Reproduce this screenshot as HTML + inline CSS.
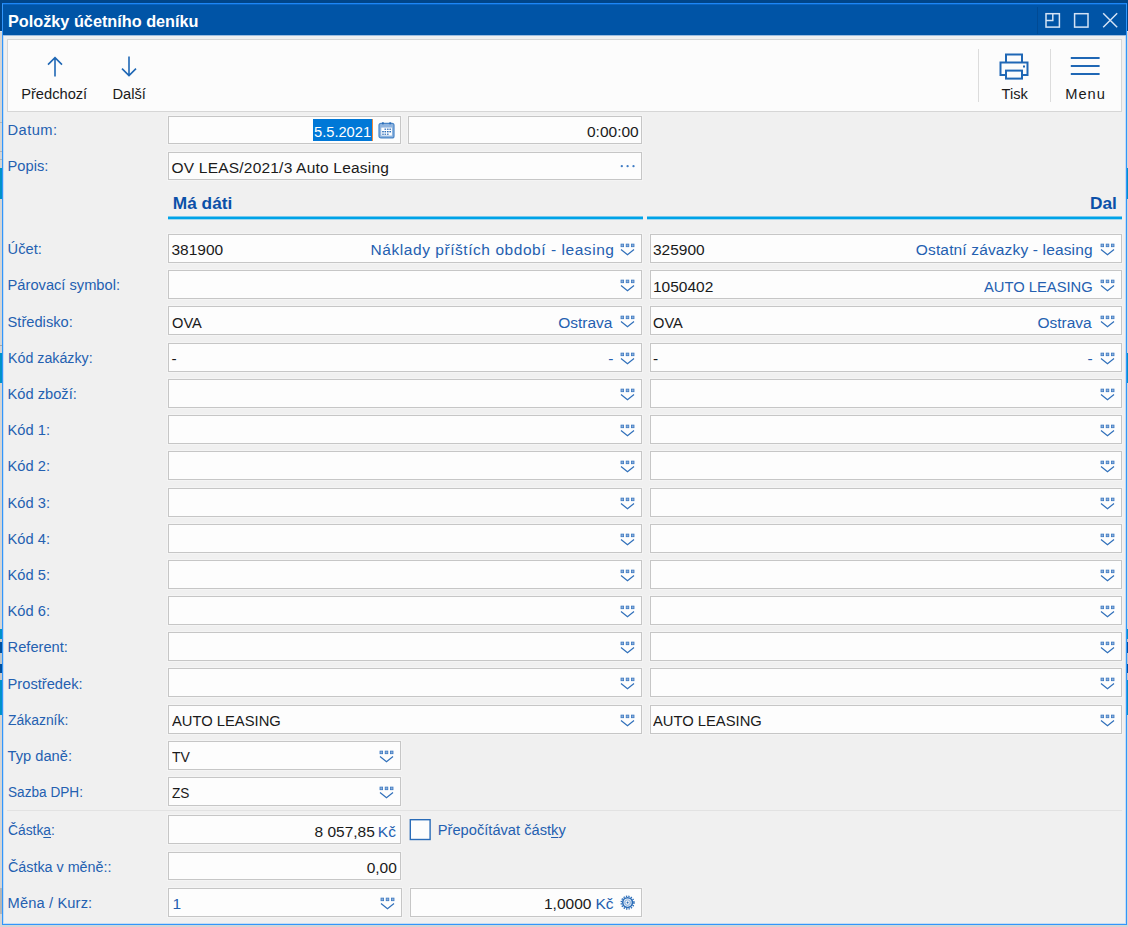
<!DOCTYPE html>
<html lang="cs"><head><meta charset="utf-8"><title>Položky účetního deníku</title>
<style>
html,body{margin:0;padding:0}
body{width:1128px;height:927px;overflow:hidden;position:relative;background:#d5d5d5;font-family:"Liberation Sans",sans-serif}
div,span,svg{position:absolute}
svg{display:block}
.t{white-space:nowrap;line-height:20px;height:20px;transform-origin:0 50%}
.f{border:1px solid #c6c6c6;background:#fdfdfd;box-shadow:0 0 0 1px rgba(255,255,255,.25)}
u{text-decoration:underline;text-underline-offset:1.5px;text-decoration-thickness:1px}
</style></head><body>
<div style="left:0;top:0;width:1128px;height:31px;background:#004589"></div>
<div style="left:0;top:31px;width:1128px;height:1px;background:#e6e6e6"></div>
<div style="left:0;top:168px;width:1128px;height:31px;background:#0091c9"></div>
<div style="left:0;top:353px;width:1128px;height:30px;background:#0091c9"></div>
<div style="left:0;top:629px;width:1128px;height:86px;background:#0091c9"></div>
<div style="left:0;top:639px;width:1128px;height:3px;background:#c8c8c8"></div>
<div style="left:0;top:642px;width:1128px;height:31px;background:#00509e"></div>
<div style="left:0;top:653px;width:1128px;height:11px;background:#bcc6cd"></div>
<div style="left:0;top:673px;width:1128px;height:7px;background:#c8c8c8"></div>
<div style="left:0;top:122px;width:2px;height:1px;background:#b4b4b4"></div>
<div style="left:0;top:151px;width:2px;height:1px;background:#b4b4b4"></div>
<div style="left:0;top:159px;width:2px;height:1px;background:#b4b4b4"></div>
<div style="left:0;top:345px;width:2px;height:1px;background:#a8a8a8"></div>
<div style="left:0;top:888px;width:2px;height:26px;background:#b6b6b6"></div>
<div style="left:2px;top:3px;width:1123px;height:920px;border:1px solid #3196fc;border-top-color:#1c86f6;background:#f0f0f0;box-shadow:inset 0 0 0 1px rgba(49,150,252,.22)"></div>
<div style="left:3px;top:4px;width:1123px;height:31px;background:#0054a6"></div>
<div style="left:3px;top:4px;width:1123px;height:1px;background:#0a63c0"></div>
<div style="left:3px;top:35px;width:1123px;height:1px;background:#9dbde0"></div>
<svg style="left:1033px;top:7px" width="92" height="28" viewBox="0 0 92 28">
<rect x="4" y="0" width="1" height="27" fill="#004a94"/>
<g fill="none" stroke="#d4e3f5" stroke-width="1.5">
<rect x="13" y="6.7" width="13.4" height="13.4"/><path d="M13 13.6 H19.8 V6.7"/>
<rect x="41.6" y="6.7" width="13.4" height="13.4"/>
<path d="M70.2 6.3 L84.2 20.3 M84.2 6.3 L70.2 20.3" stroke-width="1.45"/>
</g></svg>
<div style="left:7px;top:39px;width:1113px;height:71px;border:1px solid #d6d6d6;background:#fcfcfc"></div>
<svg style="left:45px;top:54px" width="20" height="24" viewBox="0 0 20 24"><path d="M10 22.4 V3.6 M3 10.6 L10 3.6 L17 10.6" fill="none" stroke="#1f67b5" stroke-width="1.6"/></svg>
<svg style="left:119px;top:54px" width="20" height="24" viewBox="0 0 20 24"><path d="M10 2.6 V21.6 M3 14.6 L10 21.6 L17 14.6" fill="none" stroke="#1f67b5" stroke-width="1.6"/></svg>
<div style="left:978px;top:49px;width:1px;height:53px;background:#dcdcdc"></div>
<div style="left:1050px;top:49px;width:1px;height:53px;background:#dcdcdc"></div>
<svg style="left:998px;top:52px" width="32" height="30" viewBox="0 0 32 30"><g fill="none" stroke="#1f67b5" stroke-width="2"><path d="M8 10.4 V2.4 H24 V10.4"/><path d="M8 23 H2.5 V10.4 H29.5 V23 H24"/><rect x="8" y="18.6" width="16" height="8"/></g><rect x="25" y="13.5" width="2" height="2" fill="#1f67b5"/></svg>
<svg style="left:1070px;top:54px" width="30" height="22" viewBox="0 0 30 22"><path d="M0.8 4 H29.6 M0.8 12 H29.6 M0.8 20 H29.6" fill="none" stroke="#1f67b5" stroke-width="2"/></svg>

<div class="f" style="left:168px;top:116px;width:231px;height:26px"></div>
<div class="f" style="left:408px;top:116px;width:232px;height:26px"></div>
<div class="f" style="left:168px;top:152px;width:472px;height:26px"></div>
<div style="left:313px;top:119px;width:59px;height:22px;background:#0078d7"></div><div style="left:372px;top:119px;width:1px;height:22px;background:#f08a3c"></div>
<svg style="left:378px;top:121.6px" width="17" height="17" viewBox="0 0 17 17"><rect x="1" y="1.3" width="15" height="14.6" rx="2" fill="#8fb4df" stroke="#4a86c8" stroke-width="1.2"/><rect x="3.3" y="5.6" width="10.6" height="8" fill="#fff"/><g fill="#2a6cb8"><rect x="4" y="0.3" width="1.8" height="2"/><rect x="11.3" y="0.3" width="1.8" height="2"/><rect x="6.5" y="6.6" width="1.6" height="1.2"/><rect x="9" y="6.6" width="1.6" height="1.2"/><rect x="11.4" y="6.6" width="1.6" height="1.2"/><rect x="4.2" y="9" width="1.6" height="1.4"/><rect x="6.5" y="9" width="1.6" height="1.4"/><rect x="9" y="9" width="1.6" height="1.4"/><rect x="11.4" y="9" width="1.6" height="1.4"/><rect x="4.2" y="11.6" width="1.6" height="1.2"/><rect x="6.5" y="11.6" width="1.6" height="1.2"/><rect x="9" y="11.6" width="1.6" height="1.2"/></g></svg>
<svg style="left:618px;top:162px" width="20" height="8" viewBox="0 0 20 8"><g fill="#3f7cc4"><circle cx="3.8" cy="4.2" r="1.15"/><circle cx="9.6" cy="4.2" r="1.15"/><circle cx="15.5" cy="4.2" r="1.15"/></g></svg>
<div style="left:168px;top:216px;width:475px;height:4px;background:linear-gradient(#78c9ec 0 1px,#00a3e8 1px 3px,#a2d8ee 3px 4px)"></div><div style="left:647px;top:216px;width:475px;height:4px;background:linear-gradient(#78c9ec 0 1px,#00a3e8 1px 3px,#a2d8ee 3px 4px)"></div>
<div class="f" style="left:168px;top:234px;width:472px;height:27px"></div>
<svg class="i" style="left:620px;top:242.9px" width="16" height="14" viewBox="0 0 16 14"><g fill="#8fb2dc" stroke="#3a77c0" stroke-width="0.8"><rect x="1" y="1.1" width="2.6" height="2.6"/><rect x="6.2" y="1.1" width="2.6" height="2.6"/><rect x="11.4" y="1.1" width="2.6" height="2.6"/></g><path d="M1 6.5 L7.5 11.8 L14 6.5" fill="none" stroke="#2f6fba" stroke-width="1.2"/></svg>
<div class="f" style="left:650px;top:234px;width:470px;height:27px"></div>
<svg class="i" style="left:1100px;top:242.9px" width="16" height="14" viewBox="0 0 16 14"><g fill="#8fb2dc" stroke="#3a77c0" stroke-width="0.8"><rect x="1" y="1.1" width="2.6" height="2.6"/><rect x="6.2" y="1.1" width="2.6" height="2.6"/><rect x="11.4" y="1.1" width="2.6" height="2.6"/></g><path d="M1 6.5 L7.5 11.8 L14 6.5" fill="none" stroke="#2f6fba" stroke-width="1.2"/></svg>
<div class="f" style="left:168px;top:270px;width:472px;height:27px"></div>
<svg class="i" style="left:620px;top:278.9px" width="16" height="14" viewBox="0 0 16 14"><g fill="#8fb2dc" stroke="#3a77c0" stroke-width="0.8"><rect x="1" y="1.1" width="2.6" height="2.6"/><rect x="6.2" y="1.1" width="2.6" height="2.6"/><rect x="11.4" y="1.1" width="2.6" height="2.6"/></g><path d="M1 6.5 L7.5 11.8 L14 6.5" fill="none" stroke="#2f6fba" stroke-width="1.2"/></svg>
<div class="f" style="left:650px;top:270px;width:470px;height:27px"></div>
<svg class="i" style="left:1100px;top:278.9px" width="16" height="14" viewBox="0 0 16 14"><g fill="#8fb2dc" stroke="#3a77c0" stroke-width="0.8"><rect x="1" y="1.1" width="2.6" height="2.6"/><rect x="6.2" y="1.1" width="2.6" height="2.6"/><rect x="11.4" y="1.1" width="2.6" height="2.6"/></g><path d="M1 6.5 L7.5 11.8 L14 6.5" fill="none" stroke="#2f6fba" stroke-width="1.2"/></svg>
<div class="f" style="left:168px;top:306px;width:472px;height:27px"></div>
<svg class="i" style="left:620px;top:314.9px" width="16" height="14" viewBox="0 0 16 14"><g fill="#8fb2dc" stroke="#3a77c0" stroke-width="0.8"><rect x="1" y="1.1" width="2.6" height="2.6"/><rect x="6.2" y="1.1" width="2.6" height="2.6"/><rect x="11.4" y="1.1" width="2.6" height="2.6"/></g><path d="M1 6.5 L7.5 11.8 L14 6.5" fill="none" stroke="#2f6fba" stroke-width="1.2"/></svg>
<div class="f" style="left:650px;top:306px;width:470px;height:27px"></div>
<svg class="i" style="left:1100px;top:314.9px" width="16" height="14" viewBox="0 0 16 14"><g fill="#8fb2dc" stroke="#3a77c0" stroke-width="0.8"><rect x="1" y="1.1" width="2.6" height="2.6"/><rect x="6.2" y="1.1" width="2.6" height="2.6"/><rect x="11.4" y="1.1" width="2.6" height="2.6"/></g><path d="M1 6.5 L7.5 11.8 L14 6.5" fill="none" stroke="#2f6fba" stroke-width="1.2"/></svg>
<div class="f" style="left:168px;top:343px;width:472px;height:27px"></div>
<svg class="i" style="left:620px;top:351.9px" width="16" height="14" viewBox="0 0 16 14"><g fill="#8fb2dc" stroke="#3a77c0" stroke-width="0.8"><rect x="1" y="1.1" width="2.6" height="2.6"/><rect x="6.2" y="1.1" width="2.6" height="2.6"/><rect x="11.4" y="1.1" width="2.6" height="2.6"/></g><path d="M1 6.5 L7.5 11.8 L14 6.5" fill="none" stroke="#2f6fba" stroke-width="1.2"/></svg>
<div class="f" style="left:650px;top:343px;width:470px;height:27px"></div>
<svg class="i" style="left:1100px;top:351.9px" width="16" height="14" viewBox="0 0 16 14"><g fill="#8fb2dc" stroke="#3a77c0" stroke-width="0.8"><rect x="1" y="1.1" width="2.6" height="2.6"/><rect x="6.2" y="1.1" width="2.6" height="2.6"/><rect x="11.4" y="1.1" width="2.6" height="2.6"/></g><path d="M1 6.5 L7.5 11.8 L14 6.5" fill="none" stroke="#2f6fba" stroke-width="1.2"/></svg>
<div class="f" style="left:168px;top:379px;width:472px;height:27px"></div>
<svg class="i" style="left:620px;top:387.9px" width="16" height="14" viewBox="0 0 16 14"><g fill="#8fb2dc" stroke="#3a77c0" stroke-width="0.8"><rect x="1" y="1.1" width="2.6" height="2.6"/><rect x="6.2" y="1.1" width="2.6" height="2.6"/><rect x="11.4" y="1.1" width="2.6" height="2.6"/></g><path d="M1 6.5 L7.5 11.8 L14 6.5" fill="none" stroke="#2f6fba" stroke-width="1.2"/></svg>
<div class="f" style="left:650px;top:379px;width:470px;height:27px"></div>
<svg class="i" style="left:1100px;top:387.9px" width="16" height="14" viewBox="0 0 16 14"><g fill="#8fb2dc" stroke="#3a77c0" stroke-width="0.8"><rect x="1" y="1.1" width="2.6" height="2.6"/><rect x="6.2" y="1.1" width="2.6" height="2.6"/><rect x="11.4" y="1.1" width="2.6" height="2.6"/></g><path d="M1 6.5 L7.5 11.8 L14 6.5" fill="none" stroke="#2f6fba" stroke-width="1.2"/></svg>
<div class="f" style="left:168px;top:415px;width:472px;height:27px"></div>
<svg class="i" style="left:620px;top:423.9px" width="16" height="14" viewBox="0 0 16 14"><g fill="#8fb2dc" stroke="#3a77c0" stroke-width="0.8"><rect x="1" y="1.1" width="2.6" height="2.6"/><rect x="6.2" y="1.1" width="2.6" height="2.6"/><rect x="11.4" y="1.1" width="2.6" height="2.6"/></g><path d="M1 6.5 L7.5 11.8 L14 6.5" fill="none" stroke="#2f6fba" stroke-width="1.2"/></svg>
<div class="f" style="left:650px;top:415px;width:470px;height:27px"></div>
<svg class="i" style="left:1100px;top:423.9px" width="16" height="14" viewBox="0 0 16 14"><g fill="#8fb2dc" stroke="#3a77c0" stroke-width="0.8"><rect x="1" y="1.1" width="2.6" height="2.6"/><rect x="6.2" y="1.1" width="2.6" height="2.6"/><rect x="11.4" y="1.1" width="2.6" height="2.6"/></g><path d="M1 6.5 L7.5 11.8 L14 6.5" fill="none" stroke="#2f6fba" stroke-width="1.2"/></svg>
<div class="f" style="left:168px;top:451px;width:472px;height:27px"></div>
<svg class="i" style="left:620px;top:459.9px" width="16" height="14" viewBox="0 0 16 14"><g fill="#8fb2dc" stroke="#3a77c0" stroke-width="0.8"><rect x="1" y="1.1" width="2.6" height="2.6"/><rect x="6.2" y="1.1" width="2.6" height="2.6"/><rect x="11.4" y="1.1" width="2.6" height="2.6"/></g><path d="M1 6.5 L7.5 11.8 L14 6.5" fill="none" stroke="#2f6fba" stroke-width="1.2"/></svg>
<div class="f" style="left:650px;top:451px;width:470px;height:27px"></div>
<svg class="i" style="left:1100px;top:459.9px" width="16" height="14" viewBox="0 0 16 14"><g fill="#8fb2dc" stroke="#3a77c0" stroke-width="0.8"><rect x="1" y="1.1" width="2.6" height="2.6"/><rect x="6.2" y="1.1" width="2.6" height="2.6"/><rect x="11.4" y="1.1" width="2.6" height="2.6"/></g><path d="M1 6.5 L7.5 11.8 L14 6.5" fill="none" stroke="#2f6fba" stroke-width="1.2"/></svg>
<div class="f" style="left:168px;top:488px;width:472px;height:27px"></div>
<svg class="i" style="left:620px;top:496.9px" width="16" height="14" viewBox="0 0 16 14"><g fill="#8fb2dc" stroke="#3a77c0" stroke-width="0.8"><rect x="1" y="1.1" width="2.6" height="2.6"/><rect x="6.2" y="1.1" width="2.6" height="2.6"/><rect x="11.4" y="1.1" width="2.6" height="2.6"/></g><path d="M1 6.5 L7.5 11.8 L14 6.5" fill="none" stroke="#2f6fba" stroke-width="1.2"/></svg>
<div class="f" style="left:650px;top:488px;width:470px;height:27px"></div>
<svg class="i" style="left:1100px;top:496.9px" width="16" height="14" viewBox="0 0 16 14"><g fill="#8fb2dc" stroke="#3a77c0" stroke-width="0.8"><rect x="1" y="1.1" width="2.6" height="2.6"/><rect x="6.2" y="1.1" width="2.6" height="2.6"/><rect x="11.4" y="1.1" width="2.6" height="2.6"/></g><path d="M1 6.5 L7.5 11.8 L14 6.5" fill="none" stroke="#2f6fba" stroke-width="1.2"/></svg>
<div class="f" style="left:168px;top:524px;width:472px;height:27px"></div>
<svg class="i" style="left:620px;top:532.9px" width="16" height="14" viewBox="0 0 16 14"><g fill="#8fb2dc" stroke="#3a77c0" stroke-width="0.8"><rect x="1" y="1.1" width="2.6" height="2.6"/><rect x="6.2" y="1.1" width="2.6" height="2.6"/><rect x="11.4" y="1.1" width="2.6" height="2.6"/></g><path d="M1 6.5 L7.5 11.8 L14 6.5" fill="none" stroke="#2f6fba" stroke-width="1.2"/></svg>
<div class="f" style="left:650px;top:524px;width:470px;height:27px"></div>
<svg class="i" style="left:1100px;top:532.9px" width="16" height="14" viewBox="0 0 16 14"><g fill="#8fb2dc" stroke="#3a77c0" stroke-width="0.8"><rect x="1" y="1.1" width="2.6" height="2.6"/><rect x="6.2" y="1.1" width="2.6" height="2.6"/><rect x="11.4" y="1.1" width="2.6" height="2.6"/></g><path d="M1 6.5 L7.5 11.8 L14 6.5" fill="none" stroke="#2f6fba" stroke-width="1.2"/></svg>
<div class="f" style="left:168px;top:560px;width:472px;height:27px"></div>
<svg class="i" style="left:620px;top:568.9px" width="16" height="14" viewBox="0 0 16 14"><g fill="#8fb2dc" stroke="#3a77c0" stroke-width="0.8"><rect x="1" y="1.1" width="2.6" height="2.6"/><rect x="6.2" y="1.1" width="2.6" height="2.6"/><rect x="11.4" y="1.1" width="2.6" height="2.6"/></g><path d="M1 6.5 L7.5 11.8 L14 6.5" fill="none" stroke="#2f6fba" stroke-width="1.2"/></svg>
<div class="f" style="left:650px;top:560px;width:470px;height:27px"></div>
<svg class="i" style="left:1100px;top:568.9px" width="16" height="14" viewBox="0 0 16 14"><g fill="#8fb2dc" stroke="#3a77c0" stroke-width="0.8"><rect x="1" y="1.1" width="2.6" height="2.6"/><rect x="6.2" y="1.1" width="2.6" height="2.6"/><rect x="11.4" y="1.1" width="2.6" height="2.6"/></g><path d="M1 6.5 L7.5 11.8 L14 6.5" fill="none" stroke="#2f6fba" stroke-width="1.2"/></svg>
<div class="f" style="left:168px;top:596px;width:472px;height:27px"></div>
<svg class="i" style="left:620px;top:604.9px" width="16" height="14" viewBox="0 0 16 14"><g fill="#8fb2dc" stroke="#3a77c0" stroke-width="0.8"><rect x="1" y="1.1" width="2.6" height="2.6"/><rect x="6.2" y="1.1" width="2.6" height="2.6"/><rect x="11.4" y="1.1" width="2.6" height="2.6"/></g><path d="M1 6.5 L7.5 11.8 L14 6.5" fill="none" stroke="#2f6fba" stroke-width="1.2"/></svg>
<div class="f" style="left:650px;top:596px;width:470px;height:27px"></div>
<svg class="i" style="left:1100px;top:604.9px" width="16" height="14" viewBox="0 0 16 14"><g fill="#8fb2dc" stroke="#3a77c0" stroke-width="0.8"><rect x="1" y="1.1" width="2.6" height="2.6"/><rect x="6.2" y="1.1" width="2.6" height="2.6"/><rect x="11.4" y="1.1" width="2.6" height="2.6"/></g><path d="M1 6.5 L7.5 11.8 L14 6.5" fill="none" stroke="#2f6fba" stroke-width="1.2"/></svg>
<div class="f" style="left:168px;top:632px;width:472px;height:27px"></div>
<svg class="i" style="left:620px;top:640.9px" width="16" height="14" viewBox="0 0 16 14"><g fill="#8fb2dc" stroke="#3a77c0" stroke-width="0.8"><rect x="1" y="1.1" width="2.6" height="2.6"/><rect x="6.2" y="1.1" width="2.6" height="2.6"/><rect x="11.4" y="1.1" width="2.6" height="2.6"/></g><path d="M1 6.5 L7.5 11.8 L14 6.5" fill="none" stroke="#2f6fba" stroke-width="1.2"/></svg>
<div class="f" style="left:650px;top:632px;width:470px;height:27px"></div>
<svg class="i" style="left:1100px;top:640.9px" width="16" height="14" viewBox="0 0 16 14"><g fill="#8fb2dc" stroke="#3a77c0" stroke-width="0.8"><rect x="1" y="1.1" width="2.6" height="2.6"/><rect x="6.2" y="1.1" width="2.6" height="2.6"/><rect x="11.4" y="1.1" width="2.6" height="2.6"/></g><path d="M1 6.5 L7.5 11.8 L14 6.5" fill="none" stroke="#2f6fba" stroke-width="1.2"/></svg>
<div class="f" style="left:168px;top:668px;width:472px;height:27px"></div>
<svg class="i" style="left:620px;top:676.9px" width="16" height="14" viewBox="0 0 16 14"><g fill="#8fb2dc" stroke="#3a77c0" stroke-width="0.8"><rect x="1" y="1.1" width="2.6" height="2.6"/><rect x="6.2" y="1.1" width="2.6" height="2.6"/><rect x="11.4" y="1.1" width="2.6" height="2.6"/></g><path d="M1 6.5 L7.5 11.8 L14 6.5" fill="none" stroke="#2f6fba" stroke-width="1.2"/></svg>
<div class="f" style="left:650px;top:668px;width:470px;height:27px"></div>
<svg class="i" style="left:1100px;top:676.9px" width="16" height="14" viewBox="0 0 16 14"><g fill="#8fb2dc" stroke="#3a77c0" stroke-width="0.8"><rect x="1" y="1.1" width="2.6" height="2.6"/><rect x="6.2" y="1.1" width="2.6" height="2.6"/><rect x="11.4" y="1.1" width="2.6" height="2.6"/></g><path d="M1 6.5 L7.5 11.8 L14 6.5" fill="none" stroke="#2f6fba" stroke-width="1.2"/></svg>
<div class="f" style="left:168px;top:705px;width:472px;height:27px"></div>
<svg class="i" style="left:620px;top:713.9px" width="16" height="14" viewBox="0 0 16 14"><g fill="#8fb2dc" stroke="#3a77c0" stroke-width="0.8"><rect x="1" y="1.1" width="2.6" height="2.6"/><rect x="6.2" y="1.1" width="2.6" height="2.6"/><rect x="11.4" y="1.1" width="2.6" height="2.6"/></g><path d="M1 6.5 L7.5 11.8 L14 6.5" fill="none" stroke="#2f6fba" stroke-width="1.2"/></svg>
<div class="f" style="left:650px;top:705px;width:470px;height:27px"></div>
<svg class="i" style="left:1100px;top:713.9px" width="16" height="14" viewBox="0 0 16 14"><g fill="#8fb2dc" stroke="#3a77c0" stroke-width="0.8"><rect x="1" y="1.1" width="2.6" height="2.6"/><rect x="6.2" y="1.1" width="2.6" height="2.6"/><rect x="11.4" y="1.1" width="2.6" height="2.6"/></g><path d="M1 6.5 L7.5 11.8 L14 6.5" fill="none" stroke="#2f6fba" stroke-width="1.2"/></svg>
<div class="f" style="left:168px;top:741px;width:231px;height:27px"></div>
<svg class="i" style="left:379px;top:749.9px" width="16" height="14" viewBox="0 0 16 14"><g fill="#8fb2dc" stroke="#3a77c0" stroke-width="0.8"><rect x="1" y="1.1" width="2.6" height="2.6"/><rect x="6.2" y="1.1" width="2.6" height="2.6"/><rect x="11.4" y="1.1" width="2.6" height="2.6"/></g><path d="M1 6.5 L7.5 11.8 L14 6.5" fill="none" stroke="#2f6fba" stroke-width="1.2"/></svg>
<div class="f" style="left:168px;top:777px;width:231px;height:27px"></div>
<svg class="i" style="left:379px;top:785.9px" width="16" height="14" viewBox="0 0 16 14"><g fill="#8fb2dc" stroke="#3a77c0" stroke-width="0.8"><rect x="1" y="1.1" width="2.6" height="2.6"/><rect x="6.2" y="1.1" width="2.6" height="2.6"/><rect x="11.4" y="1.1" width="2.6" height="2.6"/></g><path d="M1 6.5 L7.5 11.8 L14 6.5" fill="none" stroke="#2f6fba" stroke-width="1.2"/></svg>
<div class="f" style="left:168px;top:888px;width:232px;height:27px"></div>
<svg class="i" style="left:380px;top:896.9px" width="16" height="14" viewBox="0 0 16 14"><g fill="#8fb2dc" stroke="#3a77c0" stroke-width="0.8"><rect x="1" y="1.1" width="2.6" height="2.6"/><rect x="6.2" y="1.1" width="2.6" height="2.6"/><rect x="11.4" y="1.1" width="2.6" height="2.6"/></g><path d="M1 6.5 L7.5 11.8 L14 6.5" fill="none" stroke="#2f6fba" stroke-width="1.2"/></svg>
<div style="left:7px;top:810px;width:1115px;height:1px;background:#e2e2e2"></div>
<div class="f" style="left:168px;top:815px;width:231px;height:27px"></div>
<div class="f" style="left:168px;top:852px;width:231px;height:26px"></div>
<div class="f" style="left:410px;top:888px;width:230px;height:27px"></div>
<svg style="left:408px;top:817px" width="25" height="25" viewBox="0 0 25 25"><rect x="2.3" y="2.7" width="19.8" height="19.8" fill="#fdfdfd" stroke="#2a6cb8" stroke-width="1.4"/></svg>
<svg style="left:620.2px;top:894.6px" width="15.2" height="15.2" viewBox="0 0 16 16"><circle cx="8" cy="8" r="6.7" fill="none" stroke="#2a6cb8" stroke-width="1.5" stroke-dasharray="1.4 1.23"/><circle cx="8" cy="8" r="5.1" fill="none" stroke="#2a6cb8" stroke-width="1.7"/><circle cx="8" cy="8" r="2.9" fill="none" stroke="#9dbce0" stroke-width="1.5"/><circle cx="8" cy="8" r="1.1" fill="#2a6cb8"/></svg>
<span class="t" style="left:7.96px;top:11px;font-size:17.3px;color:#fff;transform:scaleX(0.9403);font-weight:bold">Položky účetního deníku</span>
<span class="t" style="left:21.20px;top:84px;font-size:14.67px;color:#1a1a1a">Předchozí</span>
<span class="t" style="left:112.50px;top:84px;font-size:14.67px;color:#1a1a1a">Další</span>
<span class="t" style="left:1001.50px;top:84px;font-size:14.67px;color:#1a1a1a">Tisk</span>
<span class="t" style="left:1065.30px;top:84px;font-size:14.67px;color:#1a1a1a;letter-spacing:0.967px">Menu</span>
<span class="t" style="left:7.60px;top:120px;font-size:14.67px;color:#2460b0;letter-spacing:0.440px">Datum:</span>
<span class="t" style="left:7.60px;top:156px;font-size:14.67px;color:#2460b0">Popis:</span>
<span class="t" style="left:7.60px;top:239px;font-size:14.67px;color:#2460b0">Účet:</span>
<span class="t" style="left:7.60px;top:275px;font-size:14.67px;color:#2460b0">Párovací symbol:</span>
<span class="t" style="left:7.60px;top:312px;font-size:14.67px;color:#2460b0">Středisko:</span>
<span class="t" style="left:7.60px;top:348px;font-size:14.67px;color:#2460b0;transform:scaleX(0.9706)">Kód zakázky:</span>
<span class="t" style="left:7.60px;top:384px;font-size:14.67px;color:#2460b0">Kód zboží:</span>
<span class="t" style="left:7.60px;top:420px;font-size:14.67px;color:#2460b0">Kód 1:</span>
<span class="t" style="left:7.60px;top:456px;font-size:14.67px;color:#2460b0">Kód 2:</span>
<span class="t" style="left:7.60px;top:493px;font-size:14.67px;color:#2460b0">Kód 3:</span>
<span class="t" style="left:7.60px;top:529px;font-size:14.67px;color:#2460b0">Kód 4:</span>
<span class="t" style="left:7.60px;top:565px;font-size:14.67px;color:#2460b0">Kód 5:</span>
<span class="t" style="left:7.60px;top:601px;font-size:14.67px;color:#2460b0">Kód 6:</span>
<span class="t" style="left:7.60px;top:637px;font-size:14.67px;color:#2460b0">Referent:</span>
<span class="t" style="left:7.60px;top:674px;font-size:14.67px;color:#2460b0">Prostředek:</span>
<span class="t" style="left:7.60px;top:710px;font-size:14.67px;color:#2460b0;transform:scaleX(0.9492)">Zákazník:</span>
<span class="t" style="left:7.60px;top:746px;font-size:14.67px;color:#2460b0">Typ daně:</span>
<span class="t" style="left:7.60px;top:782px;font-size:14.67px;color:#2460b0;transform:scaleX(0.9291)">Sazba DPH:</span>
<span class="t" style="left:7.60px;top:820px;font-size:14.67px;color:#2460b0;transform:scaleX(0.9429)">Částk<u>a</u>:</span>
<span class="t" style="left:7.60px;top:857px;font-size:14.67px;color:#2460b0;transform:scaleX(0.9762)">Částka v měně::</span>
<span class="t" style="left:7.60px;top:893px;font-size:14.67px;color:#2460b0;letter-spacing:0.136px">Měna / Kurz:</span>
<span class="t" style="left:313.65px;top:122px;font-size:15.5px;color:#fff;transform:scaleX(0.9458)">5.5.2021</span>
<span class="t" style="left:587.00px;top:122px;font-size:15.5px;color:#1a1a1a">0:00:00</span>
<span class="t" style="left:171.50px;top:158px;font-size:15.5px;color:#1a1a1a;letter-spacing:0.208px">OV LEAS/2021/3 Auto Leasing</span>
<span class="t" style="left:172.80px;top:193px;font-size:17.3px;color:#0b50a8;font-weight:bold">Má dáti</span>
<span class="t" style="left:1090.00px;top:193px;font-size:17.3px;color:#0b50a8;font-weight:bold">Dal</span>
<span class="t" style="left:171.50px;top:240px;font-size:15.5px;color:#1a1a1a">381900</span>
<span class="t" style="left:370.60px;top:240px;font-size:15.5px;color:#2460b0;letter-spacing:0.550px">Náklady příštích období - leasing</span>
<span class="t" style="left:653.00px;top:240px;font-size:15.5px;color:#1a1a1a">325900</span>
<span class="t" style="left:915.80px;top:240px;font-size:15.5px;color:#2460b0;letter-spacing:0.150px">Ostatní závazky - leasing</span>
<span class="t" style="left:653.00px;top:277px;font-size:15.5px;color:#1a1a1a">1050402</span>
<span class="t" style="left:984.00px;top:277px;font-size:15.5px;color:#2460b0;transform:scaleX(0.9509)">AUTO LEASING</span>
<span class="t" style="left:171.50px;top:313px;font-size:15.5px;color:#1a1a1a;transform:scaleX(0.9437)">OVA</span>
<span class="t" style="left:558.20px;top:313px;font-size:15.5px;color:#2460b0">Ostrava</span>
<span class="t" style="left:653.00px;top:313px;font-size:15.5px;color:#1a1a1a;transform:scaleX(0.9438)">OVA</span>
<span class="t" style="left:1037.40px;top:313px;font-size:15.5px;color:#2460b0">Ostrava</span>
<span class="t" style="left:171.50px;top:349px;font-size:15.5px;color:#1a1a1a">-</span>
<span class="t" style="left:608.20px;top:349px;font-size:15.5px;color:#2460b0">-</span>
<span class="t" style="left:653.00px;top:349px;font-size:15.5px;color:#1a1a1a">-</span>
<span class="t" style="left:1087.40px;top:349px;font-size:15.5px;color:#2460b0">-</span>
<span class="t" style="left:171.50px;top:711px;font-size:15.5px;color:#1a1a1a;transform:scaleX(0.9518)">AUTO LEASING</span>
<span class="t" style="left:653.00px;top:711px;font-size:15.5px;color:#1a1a1a;transform:scaleX(0.9518)">AUTO LEASING</span>
<span class="t" style="left:171.50px;top:747px;font-size:15.5px;color:#1a1a1a;transform:scaleX(0.9050)">TV</span>
<span class="t" style="left:171.50px;top:783px;font-size:15.5px;color:#1a1a1a;transform:scaleX(0.8800)">ZS</span>
<span class="t" style="left:314.50px;top:822px;font-size:15.5px;color:#1a1a1a">8 057,85</span>
<span class="t" style="left:377.80px;top:822px;font-size:15.5px;color:#2460b0">Kč</span>
<span class="t" style="left:437.80px;top:820px;font-size:14.67px;color:#2460b0">Přepočítávat část<u>k</u>y</span>
<span class="t" style="left:366.70px;top:858px;font-size:15.5px;color:#1a1a1a">0,00</span>
<span class="t" style="left:172.50px;top:894px;font-size:15.5px;color:#2460b0">1</span>
<span class="t" style="left:544.00px;top:894px;font-size:15.5px;color:#1a1a1a">1,0000</span>
<span class="t" style="left:595.40px;top:894px;font-size:15.5px;color:#2460b0">Kč</span>
</body></html>
